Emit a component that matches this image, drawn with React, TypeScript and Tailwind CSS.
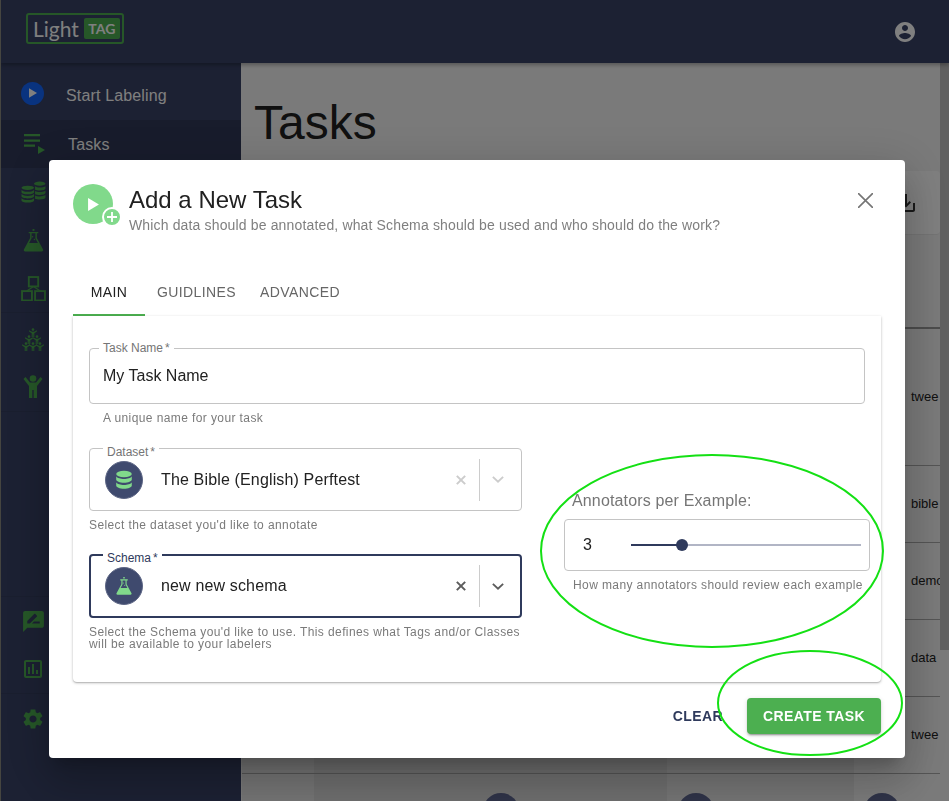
const sans = "font-['Liberation_Sans',Arial,sans-serif]";

const Icon = ({ d, className }: { d: string; className?: string }) => (
  <svg viewBox="0 0 24 24" fill="currentColor" className={className}>
    <path d={d} />
  </svg>
);

const DatabaseIcon = ({ className }: { className?: string }) => (
  <svg viewBox="0 0 24 24" fill="currentColor" className={className}>
    <ellipse cx="12" cy="5.500" rx="8.500" ry="3.500" />
    <path d="M3.500 8c1 2 5 3 8.500 3s7.500-1 8.500-3v3.500c0 2-3.800 3.500-8.500 3.500s-8.500-1.500-8.500-3.500z" />
    <path d="M3.500 14.500c1 2 5 3 8.500 3s7.500-1 8.500-3V18c0 2-3.800 3.500-8.500 3.500S3.500 20 3.500 18z" />
  </svg>
);

const CoinsIcon = ({ className }: { className?: string }) => (
  <svg viewBox="0 0 24 24" fill="currentColor" className={className}>
    <ellipse cx="6.500" cy="7.500" rx="6" ry="2" />
    <path d="M.500 9.500c1 1.300 3.500 1.800 6 1.800s5-.5 6-1.800v2.200c0 1.100-2.700 2-6 2s-6-.9-6-2z" />
    <path d="M.500 13.500c1 1.300 3.500 1.800 6 1.800s5-.5 6-1.800v2.200c0 1.100-2.700 2-6 2s-6-.9-6-2z" />
    <path d="M.500 17.500c1 1.300 3.500 1.800 6 1.800s5-.5 6-1.800v2.200c0 1.100-2.700 2-6 2s-6-.9-6-2z" />
    <ellipse cx="18" cy="3.500" rx="5.500" ry="2" />
    <path d="M13.500 6c1 .9 2.800 1.300 4.500 1.300s4.500-.4 5.500-1.300v2.200c0 1-2.500 1.900-5.500 1.900-1.700 0-3.400-.3-4.500-.8z" />
    <path d="M13.500 10.500c1 .6 2.800 1 4.500 1s4.500-.4 5.500-1.300v2.200c0 1-2.500 1.900-5.500 1.900-1.700 0-3.400-.2-4.500-.7z" />
    <path d="M13.500 14.800c1 .6 2.800 1 4.500 1s4.500-.4 5.500-1.300v2.200c0 1-2.500 1.900-5.500 1.900-1.700 0-3.400-.2-4.500-.7z" />
  </svg>
);

const FlaskIcon = ({ className }: { className?: string }) => (
  <svg viewBox="0 0 24 24" fill="currentColor" className={className}>
    <path d="M11 0h2v2h-2z" />
    <path fillRule="evenodd" d="M7 3h10v1.500h-1.500v5L22 21.500c.4 1-.2 2-1.300 2H3.300c-1.100 0-1.700-1-1.300-2L8.500 9.500v-5H7zM10 4.500v5.400L7.400 14.500h9.200L14 9.900V4.500z" />
    <circle cx="11" cy="8" r=".8" />
    <circle cx="13" cy="11" r=".8" />
  </svg>
);

const HierarchyIcon = ({ className }: { className?: string }) => (
  <svg viewBox="0 0 24 24" fill="none" stroke="currentColor" strokeWidth="1.800" className={className}>
    <rect x="7.500" y="1" width="9" height="9" />
    <rect x="1" y="14.500" width="9.500" height="9" />
    <rect x="13.500" y="14.500" width="9.500" height="9" />
    <path d="M12 10L5.500 14.500M12 10l6.500 4.500" strokeWidth="1.200" />
  </svg>
);

const Person = ({ x, y }: { x: number; y: number }) => (
  <g transform={`translate(${x} ${y}) scale(1.300)`}>
    <circle cx="0" cy="-2.600" r="1" />
    <path d="M-3-2.200l2.200 1.200h1.600L3-2.200v1L1 .2V3H.2V1h-.4v2H-1V.2L-3-1.200z" />
  </g>
);

const PyramidIcon = ({ className }: { className?: string }) => (
  <svg viewBox="0 0 24 24" fill="currentColor" className={className}>
    <Person x={12} y={5} />
    <Person x={8} y={12} />
    <Person x={16} y={12} />
    <Person x={5} y={19} />
    <Person x={12} y={19} />
    <Person x={19} y={19} />
  </svg>
);

const CheerIcon = ({ className }: { className?: string }) => (
  <svg viewBox="0 0 24 24" fill="currentColor" className={className}>
    <circle cx="12" cy="4.500" r="3.300" />
    <path d="M2.500 5L4.500 3 9 8.500h6L19.500 3l2 2L16 12v12h-3.300v-8h-1.400v8H8V12z" />
  </svg>
);

const menuTop = [
  { key: "datasets", h: "h-[48px]", icon: <CoinsIcon className="w-[25px] h-[25px]" /> },
  { key: "schemas", h: "h-[48px]", icon: <FlaskIcon className="w-[23px] h-[27px]" /> },
  { key: "structure", h: "h-[48px]", icon: <HierarchyIcon className="w-[25px] h-[25px]" /> },
  { key: "people", h: "h-[49px] pt-[5px] border-t border-[#343d5e]", icon: <PyramidIcon className="w-[24px] h-[24px]" /> },
  { key: "labelers", h: "h-[50px]", icon: <CheerIcon className="w-[24px] h-[24px]" /> },
];

const Sidebar = () => (
  <aside className="w-[240px] shrink-0 bg-[#384266] text-white flex flex-col tracking-[0.15px]">
    <div className="h-[57px] shrink-0 flex items-center pt-[9px]">
      <div className="w-[65px] flex justify-center pr-[2px] -mt-[6px]">
        <div className="w-[23px] h-[23px] rounded-full bg-[#1266ff] flex items-center justify-center">
          <svg viewBox="0 0 10 12" className="w-[8px] h-[10px] fill-white"><path d="M0 0l10 6-10 6z" /></svg>
        </div>
      </div>
      <span className="text-base">Start Labeling</span>
    </div>
    <div className="h-[48px] shrink-0 flex items-center bg-[#303858] pt-[2px]">
      <div className="w-[67px] flex justify-center pr-[2px] text-[#4caf50]">
        <svg viewBox="0 0 24 24" fill="currentColor" className="w-[24px] h-[24px]">
          <path d="M2 1h16v2.300H2zM2 6.500h16v2.300H2zM2 11.500h11v2.300H2zM16 13v8l7-4z" />
        </svg>
      </div>
      <span className="text-base">Tasks</span>
    </div>
    {menuTop.map((item) => (
      <div key={item.key} className={`${item.h} shrink-0 flex items-center`}>
        <div className="w-[64px] flex justify-center text-[#4caf50]">{item.icon}</div>
      </div>
    ))}
    <div className="h-[185px] shrink-0 border-t border-[#343d5e]" />
    <div className="border-t border-[#343d5e] h-[97px] shrink-0 flex flex-col text-[#4caf50]">
      <div className="h-[48px] shrink-0 flex items-center w-[64px] justify-center">
        <Icon className="w-[25px] h-[25px]" d="M20 2H4c-1.100 0-1.990.9-1.990 2L2 22l4-4h14c1.100 0 2-.9 2-2V4c0-1.100-.9-2-2-2zM6 14v-2.470l6.880-6.880c.2-.2.51-.2.71 0l1.770 1.770c.2.2.2.51 0 .71L8.470 14H6zm12 0h-7.500l2-2H18v2z" />
      </div>
      <div className="h-[48px] shrink-0 flex items-center w-[64px] justify-center">
        <Icon className="w-[24px] h-[24px]" d="M9 17H7v-7h2v7zm4 0h-2V7h2v10zm4 0h-2v-4h2v4zm2 2H5V5h14v14zm0-16H5c-1.100 0-2 .9-2 2v14c0 1.100.9 2 2 2h14c1.100 0 2-.9 2-2V5c0-1.100-.9-2-2-2z" />
      </div>
    </div>
    <div className="border-t border-[#343d5e] h-[50px] shrink-0 flex items-center w-full pl-[20px] text-[#4caf50]">
      <Icon className="w-[24px] h-[24px]" d="M19.140 12.940c.04-.3.06-.61.06-.94 0-.32-.02-.64-.07-.94l2.030-1.580c.18-.14.23-.41.12-.61l-1.920-3.320c-.12-.22-.37-.29-.59-.22l-2.390.96c-.5-.38-1.030-.7-1.620-.94l-.36-2.540c-.04-.24-.24-.41-.48-.41h-3.840c-.24 0-.43.17-.47.41l-.36 2.540c-.59.24-1.130.57-1.620.94l-2.390-.96c-.22-.08-.47 0-.59.22L2.740 8.870c-.12.21-.08.47.12.61l2.030 1.580c-.05.3-.09.63-.09.94s.02.64.07.94l-2.030 1.580c-.18.14-.23.41-.12.61l1.920 3.320c.12.22.37.29.59.22l2.390-.96c.5.38 1.030.7 1.620.94l.36 2.540c.05.24.24.41.48.41h3.840c.24 0 .44-.17.47-.41l.36-2.540c.59-.24 1.130-.56 1.620-.94l2.390.96c.22.08.47 0 .59-.22l1.920-3.320c.12-.22.07-.47-.12-.61l-2.010-1.580zM12 15.600c-1.980 0-3.600-1.620-3.600-3.600s1.620-3.600 3.600-3.600 3.600 1.620 3.600 3.600-1.620 3.600-3.600 3.600z" />
    </div>
  </aside>
);

const rows = [
  { h: "h-[137px]", label: "twee" },
  { h: "h-[77px]", label: "bible" },
  { h: "h-[77px]", label: "demo" },
  { h: "h-[77px]", label: "data" },
  { h: "h-[77px]", label: "twee" },
];

const Background = () => (
  <div className={`h-[801px] overflow-hidden flex flex-col border-l border-[#8a8a80] bg-[#f5f5f5] ${sans}`}>
    <header className="h-[63px] shrink-0 bg-[#384266] flex items-center justify-between pl-[25px] pr-[32px] shadow-[0_2px_4px_rgba(0,0,0,0.3)] relative">
      <div className="w-[98px] h-[31px] mt-[-7px] border-2 border-[#4caf50] rounded-[3px] flex items-center pl-[5px] gap-[3px]">
        <span className="text-[21px] leading-none text-white font-['Lato',sans-serif]">Light</span>
        <span className="ml-[2px] bg-[#4caf50] text-white rounded-[2px] w-[36px] h-[21px] flex items-center justify-center text-[14px] font-bold font-['Lato',sans-serif]">TAG</span>
      </div>
      <Icon className="w-[24px] h-[24px] text-white" d="M12 2C6.480 2 2 6.480 2 12s4.480 10 10 10 10-4.480 10-10S17.520 2 12 2zm0 3c1.660 0 3 1.340 3 3s-1.340 3-3 3-3-1.340-3-3 1.340-3 3-3zm0 14.200c-2.500 0-4.710-1.280-6-3.220.03-1.990 4-3.080 6-3.080 1.990 0 5.970 1.090 6 3.080-1.290 1.940-3.500 3.220-6 3.220z" />
    </header>
    <div className="flex-1 flex min-h-0">
      <Sidebar />
      <main className="flex-1 min-w-0 flex flex-col pl-px">
        <div className="h-[108px] shrink-0 flex items-center pl-[12px] pt-[12px]">
          <h1 className="text-[48px] leading-none text-[#212121]">Tasks</h1>
        </div>
        <div className="h-[64px] shrink-0 bg-white rounded-[4px] flex items-center justify-end pr-[22px] border-b border-[#e8e8e8]">
          <Icon className="w-[24px] h-[24px] text-[#333]" d="M19 12v7H5v-7H3v7c0 1.100.9 2 2 2h14c1.100 0 2-.9 2-2v-7h-2zm-6 .67l2.590-2.580L17 11.500l-5 5-5-5 1.410-1.410L11 12.670V3h2z" />
        </div>
        <div className="mt-[92px] border-t-2 border-[#999] flex flex-col">
          {rows.map((row, i) => (
            <div key={i} className={`${row.h} shrink-0 grid grid-cols-[72px_353px_187px_1fr] border-b border-[#aaa]`}>
              <div className="bg-[#e8e8e8]" />
              <div className="bg-[#dcdcdc]" />
              <div className="bg-[#e8e8e8]" />
              <div className="flex items-center pl-[57px] text-[13px] overflow-hidden text-[#212121] bg-[#f5f5f5]">{row.label}</div>
            </div>
          ))}
          <div className="h-[40px] shrink-0 grid grid-cols-[72px_353px_187px_1fr] overflow-hidden">
            <div className="bg-[#e8e8e8]" />
            <div className="bg-[#dcdcdc] pt-[19px] pl-[169px]"><div className="w-[36px] h-[36px] rounded-full bg-[#5e6690]" /></div>
            <div className="bg-[#e8e8e8] pt-[19px] pl-[11px]"><div className="w-[36px] h-[36px] rounded-full bg-[#5e6690]" /></div>
            <div className="bg-[#f5f5f5] pt-[19px] pl-[10px]"><div className="w-[36px] h-[36px] rounded-full bg-[#5e6690]" /></div>
          </div>
        </div>
      </main>
      <div className="w-[9px] shrink-0 bg-[#f5f5f5]">
        <div className="h-[587px] bg-[#c0c0c0]" />
      </div>
    </div>
  </div>
);

const Helper = ({ children, className = "" }: { children: React.ReactNode; className?: string }) => (
  <p className={`text-[12px] tracking-[0.4px] text-[#7a7a7a] ${className}`}>{children}</p>
);

const FloatLabel = ({ text, className, active }: { text: string; className: string; active?: boolean }) => (
  <span className={`absolute bg-white px-[4px] text-[12px] leading-[14px] whitespace-nowrap ${className} ${active ? "text-[#2f3a5c]" : "text-[#757575]"}`}>
    {text}
    <span className="ml-[2px]">*</span>
  </span>
);

const SelectField = ({
  label,
  value,
  active,
  icon,
}: {
  label: string;
  value: string;
  active?: boolean;
  icon: React.ReactNode;
}) => (
  <div className={`relative rounded-[4px] flex items-center ${active ? "h-[64px] border-2 border-[#2f3a5c] pl-[14px] pr-[16px]" : "h-[63px] border border-[#c4c4c4] pl-[15px] pr-[17px]"}`}>
    <FloatLabel text={label} active={active} className={active ? "left-[12px] -top-[5px]" : "left-[13px] -top-[4px]"} />
    <div className="w-[38px] h-[38px] rounded-full bg-[#3f4a6e] border border-[#5d6685] flex items-center justify-center">{icon}</div>
    <span className="ml-[18px] flex-1 text-base tracking-[0.15px] text-[#212121]">{value}</span>
    <svg viewBox="0 0 12 12" className={`w-[10px] h-[10px] mr-[13px] ${active ? "stroke-[#5c5c5c]" : "stroke-[#cccccc]"}`} fill="none" strokeWidth="2.400">
      <path d="M1 1l10 10M11 1L1 11" />
    </svg>
    <div className="w-px h-[42px] bg-[#cccccc]" />
    <svg viewBox="0 0 14 8" className={`w-[12px] h-[7px] ml-[12px] ${active ? "stroke-[#5c5c5c]" : "stroke-[#cccccc]"}`} fill="none" strokeWidth="2.200">
      <path d="M1 1l6 5.500L13 1" />
    </svg>
  </div>
);

const Modal = () => (
  <div className={`fixed left-[49px] top-[160px] w-[856px] h-[598px] bg-white rounded-[4px] flex flex-col shadow-[0_11px_15px_-7px_rgba(0,0,0,0.2),0_24px_38px_3px_rgba(0,0,0,0.14),0_9px_46px_8px_rgba(0,0,0,0.12)] ${sans}`}>
    <div className="h-[104px] shrink-0 flex px-[24px] pt-[24px]">
      <div className="relative w-[40px] h-[40px] rounded-full bg-[#81d98b] flex items-center justify-center shrink-0">
        <svg viewBox="0 0 10 12" className="w-[11px] h-[13px] fill-white"><path d="M0 0l10 6-10 6z" /></svg>
        <div className="absolute -right-[9px] -bottom-[3px] w-[20px] h-[20px] rounded-full bg-[#81d98b] border-2 border-white flex items-center justify-center">
          <svg viewBox="0 0 10 10" className="w-[10px] h-[10px] stroke-white" strokeWidth="1.800"><path d="M5 0v10M0 5h10" /></svg>
        </div>
      </div>
      <div className="ml-[16px] flex-1">
        <h2 className="mt-[1px] text-[24px] leading-[30px] text-[#212121]">Add a New Task</h2>
        <p className="mt-[2px] text-[14px] leading-[16px] tracking-[0.15px] text-[#7f7f7f]">Which data should be annotated, what Schema should be used and who should do the work?</p>
      </div>
      <svg viewBox="0 0 14 14" className="w-[15px] h-[15px] mt-[9px] mr-[8px] stroke-[#757575]" strokeWidth="1.500"><path d="M0 0l14 14M14 0L0 14" /></svg>
    </div>
    <div className="ml-[24px] h-[52px] shrink-0 flex items-center text-[14px] tracking-[0.4px] text-[#666]">
      <div className="w-[72px] h-full pt-[6px] flex items-center justify-center text-[#212121] border-b-2 border-[#4caf50]">MAIN</div>
      <div className="ml-[12px] mt-[4px]">GUIDLINES</div>
      <div className="ml-[24px] mt-[4px]">ADVANCED</div>
    </div>
    <div className="mx-[24px] h-[366px] shrink-0 rounded-b-[4px] px-[16px] pt-[32px] shadow-[0_1px_3px_rgba(0,0,0,0.25),0_1px_1px_rgba(0,0,0,0.12)]">
      <div className="relative h-[56px] border border-[#c4c4c4] rounded-[4px] flex items-center pl-[13px] text-base text-[#212121]">
        <FloatLabel text="Task Name" className="left-[9px] -top-[8px]" />
        My Task Name
      </div>
      <Helper className="leading-[10px] mt-[9px] ml-[14px]">A unique name for your task</Helper>
      <div className="flex mt-[25px]">
        <div className="w-[433px] shrink-0">
          <SelectField
            label="Dataset"
            value="The Bible (English) Perftest"
            icon={<DatabaseIcon className="w-[22px] h-[22px] text-[#81d98b]" />}
          />
          <Helper className="leading-[10px] mt-[9px]">Select the dataset you'd like to annotate</Helper>
          <div className="h-[24px]" />
          <SelectField
            label="Schema"
            value="new new schema"
            active
            icon={<FlaskIcon className="w-[18px] h-[20px] text-[#81d98b]" />}
          />
          <Helper className="leading-[12px] mt-[8px]">
            Select the Schema you'd like to use. This defines what Tags and/or Classes will be available to your labelers
          </Helper>
        </div>
        <div className="ml-[42px] w-[306px] shrink-0 pt-[43px]">
          <div className="ml-[8px] mt-[1px] -mb-[1px] text-base leading-[18px] tracking-[0.15px] text-[#757575]">Annotators per Example:</div>
          <div className="mt-[10px] h-[52px] border border-[#c4c4c4] rounded-[4px] flex items-center pl-[18px] pr-[8px] text-base text-[#212121]">
            <span className="w-[48px]">3</span>
            <div className="relative flex-1 h-[2px] bg-[#b1b5c5]">
              <div className="h-full w-[51px] bg-[#2f3a5c]" />
              <div className="absolute left-[45px] -top-[5px] w-[12px] h-[12px] rounded-full bg-[#2f3a5c]" />
            </div>
          </div>
          <Helper className="leading-[10px] mt-[9px] ml-[9px] whitespace-nowrap">How many annotators should review each example</Helper>
        </div>
      </div>
    </div>
    <div className="flex items-center justify-end mr-[24px] mt-[16px]">
      <span className="text-[14px] font-bold tracking-[0.4px] text-[#2f3a5c] mr-[24px]">CLEAR</span>
      <div className="w-[134px] h-[36px] bg-[#4caf50] rounded-[4px] text-white text-[14px] font-bold tracking-[0.4px] flex items-center justify-center shadow-[0_3px_1px_-2px_rgba(0,0,0,0.2),0_2px_2px_rgba(0,0,0,0.14),0_1px_5px_rgba(0,0,0,0.12)]">
        CREATE TASK
      </div>
    </div>
  </div>
);

export default function App() {
  return (
    <div className="relative h-[801px] overflow-hidden">
      <Background />
      <div className="fixed inset-0 bg-black/50" />
      <Modal />
      <svg className="fixed inset-0 w-full h-full pointer-events-none" viewBox="0 0 949 801" fill="none" stroke="#14e014" strokeWidth="2">
        <ellipse cx="712" cy="551" rx="171" ry="96" />
        <ellipse cx="810" cy="703" rx="92" ry="52" />
      </svg>
    </div>
  );
}
